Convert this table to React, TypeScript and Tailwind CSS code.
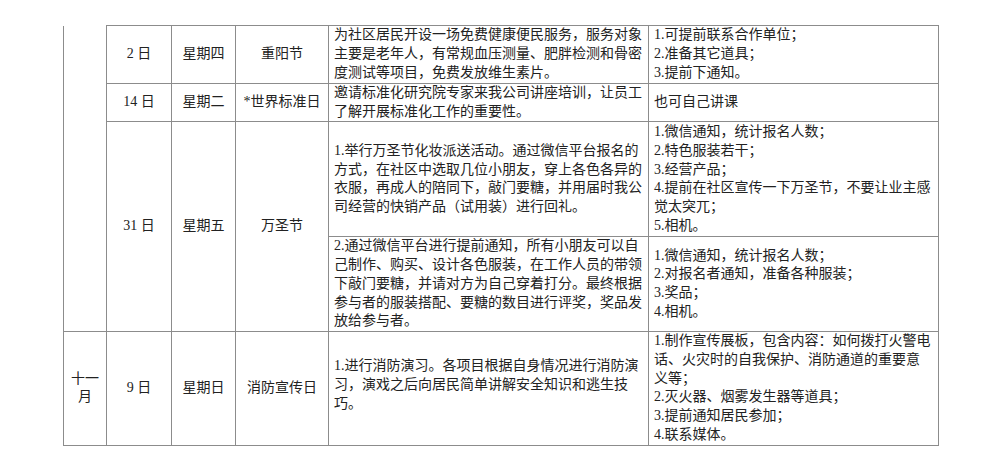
import React from 'react'

const cell = 'border border-[#8c8c8c] px-[5px] py-0 align-middle'
const center = `${cell} text-center`

function Lines({ lines }: { lines: string[] }) {
  return (
    <div className="whitespace-nowrap">
      {lines.map((l, i) => (
        <div key={i}>{l}</div>
      ))}
    </div>
  )
}

export default function App() {
  return (
    <div
      className="w-[1000px] h-[464px] bg-white overflow-hidden pt-[25px] pl-[63px] text-[14px] leading-[18.7px] text-[#222]"
      style={{ fontFamily: "'Liberation Serif', 'Noto Sans CJK SC', serif" }}
    >
      <table className="table-fixed border-collapse w-[875px]">
        <colgroup>
          <col className="w-[43px]" />
          <col className="w-[65px]" />
          <col className="w-[64px]" />
          <col className="w-[93px]" />
          <col className="w-[320px]" />
          <col className="w-[290px]" />
        </colgroup>
        <tbody>
          {/* 重阳节 */}
          <tr className="h-[58px]">
            <td rowSpan={4} className="border-l border-r border-b border-[#8c8c8c]"></td>
            <td className={center}>2 日</td>
            <td className={center}>星期四</td>
            <td className={center}>重阳节</td>
            <td className={cell}>
              <Lines
                lines={[
                  '为社区居民开设一场免费健康便民服务，服务对象',
                  '主要是老年人，有常规血压测量、肥胖检测和骨密',
                  '度测试等项目，免费发放维生素片。',
                ]}
              />
            </td>
            <td className={cell}>
              <Lines lines={['1.可提前联系合作单位；', '2.准备其它道具；', '3.提前下通知。']} />
            </td>
          </tr>

          {/* 世界标准日 */}
          <tr className="h-[38px]">
            <td className={center}>14 日</td>
            <td className={center}>星期二</td>
            <td className={center}>*世界标准日</td>
            <td className={cell}>
              <Lines
                lines={[
                  '邀请标准化研究院专家来我公司讲座培训，让员工',
                  '了解开展标准化工作的重要性。',
                ]}
              />
            </td>
            <td className={cell}>也可自己讲课</td>
          </tr>

          {/* 万圣节 */}
          <tr className="h-[115px]">
            <td rowSpan={2} className={center}>31 日</td>
            <td rowSpan={2} className={center}>星期五</td>
            <td rowSpan={2} className={center}>万圣节</td>
            <td className={cell}>
              <Lines
                lines={[
                  '1.举行万圣节化妆派送活动。通过微信平台报名的',
                  '方式，在社区中选取几位小朋友，穿上各色各异的',
                  '衣服，再成人的陪同下，敲门要糖，并用届时我公',
                  '司经营的快销产品（试用装）进行回礼。',
                ]}
              />
            </td>
            <td className={cell}>
              <Lines
                lines={[
                  '1.微信通知，统计报名人数；',
                  '2.特色服装若干；',
                  '3.经营产品；',
                  '4.提前在社区宣传一下万圣节，不要让业主感',
                  '觉太突兀；',
                  '5.相机。',
                ]}
              />
            </td>
          </tr>
          <tr className="h-[94px]">
            <td className={cell}>
              <Lines
                lines={[
                  '2.通过微信平台进行提前通知，所有小朋友可以自',
                  '己制作、购买、设计各色服装，在工作人员的带领',
                  '下敲门要糖，并请对方为自己穿着打分。最终根据',
                  '参与者的服装搭配、要糖的数目进行评奖，奖品发',
                  '放给参与者。',
                ]}
              />
            </td>
            <td className={cell}>
              <Lines
                lines={[
                  '1.微信通知，统计报名人数；',
                  '2.对报名者通知，准备各种服装；',
                  '3.奖品；',
                  '4.相机。',
                ]}
              />
            </td>
          </tr>

          {/* 消防宣传日 */}
          <tr className="h-[114px]">
            <td className={center}>
              <div>十一</div>
              <div>月</div>
            </td>
            <td className={center}>9 日</td>
            <td className={center}>星期日</td>
            <td className={center}>消防宣传日</td>
            <td className={cell}>
              <div className="-mt-[6px]">
                <Lines
                  lines={[
                    '1.进行消防演习。各项目根据自身情况进行消防演',
                    '习，演戏之后向居民简单讲解安全知识和逃生技',
                    '巧。',
                  ]}
                />
              </div>
            </td>
            <td className={cell}>
              <Lines
                lines={[
                  '1.制作宣传展板，包含内容：如何拨打火警电',
                  '话、火灾时的自我保护、消防通道的重要意',
                  '义等；',
                  '2.灭火器、烟雾发生器等道具；',
                  '3.提前通知居民参加；',
                  '4.联系媒体。',
                ]}
              />
            </td>
          </tr>
        </tbody>
      </table>
    </div>
  )
}
